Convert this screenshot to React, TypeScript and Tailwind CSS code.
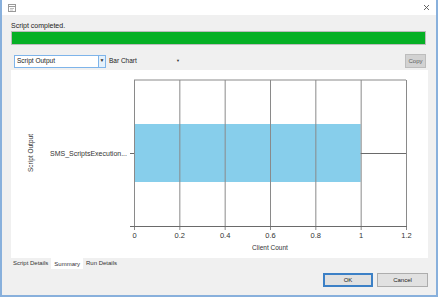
import React from 'react';

const ticks = [0, 0.2, 0.4, 0.6, 0.8, 1, 1.2];

function Chart() {
  // plot geometry inside the white panel
  const x0 = 123;
  const x1 = 395;
  const top = 10;
  const axis = 156;
  const sx = (v: number) => x0 + ((x1 - x0) * v) / 1.2;

  return (
    <svg width="417" height="188" className="block" style={{ fontFamily: '"Liberation Sans", Arial, sans-serif' }}>
      <line x1={x0} y1={top} x2={x1} y2={top} stroke="#8a8a8a" strokeWidth="1" />
      <rect x={x0} y={54} width={sx(1) - x0} height={58} fill="#87ceeb" />
      {ticks.map((t) => (
        <line key={t} x1={sx(t) + 0.5} y1={top} x2={sx(t) + 0.5} y2={axis + 4} stroke="#8a8a8a" strokeWidth="1" />
      ))}
      <line x1={sx(1)} y1={83.5} x2={x1} y2={83.5} stroke="#6a6a6a" strokeWidth="1" />
      <line x1={x0 - 4} y1={83.5} x2={x0} y2={83.5} stroke="#6a6a6a" strokeWidth="1" />
      <line x1={x0 - 4} y1={axis + 0.5} x2={x1 + 1} y2={axis + 0.5} stroke="#6a6a6a" strokeWidth="1" />
      {ticks.map((t) => (
        <text key={t} x={sx(t) + 0.5} y={168} fontSize="7.5" fill="#333" textAnchor="middle">
          {t}
        </text>
      ))}
      <text x={259} y={180} fontSize="6.5" fill="#333" textAnchor="middle">
        Client Count
      </text>
      <text x={116} y={86} fontSize="7" fill="#333" textAnchor="end">
        SMS_ScriptsExecution...
      </text>
      <text x={0} y={0} fontSize="6.5" fill="#333" textAnchor="middle" transform="translate(22 83) rotate(-90)">
        Script Output
      </text>
    </svg>
  );
}

export default function App() {
  return (
    <div
      className="w-[438px] h-[297px] flex flex-col bg-[#f0f0f0] border-x-2 border-b-2 border-[#88b0dc] text-[6.5px] text-[#222]"
      style={{ fontFamily: '"Liberation Sans", Arial, sans-serif' }}
    >
      <div className="h-[15px] bg-white flex items-center justify-between pl-[6px] pr-[6px]">
        <svg width="8" height="8" viewBox="0 0 8 8">
          <rect x="0.5" y="0.5" width="7" height="7" fill="#fff" stroke="#9a9a9a" />
          <line x1="1" y1="2.5" x2="7" y2="2.5" stroke="#9a9a9a" />
          <line x1="2" y1="4.5" x2="6" y2="4.5" stroke="#c0c0c0" />
          <line x1="2" y1="6" x2="5" y2="6" stroke="#c0c0c0" />
        </svg>
        <svg width="7" height="7" viewBox="0 0 7 7">
          <path d="M1 1 L6 6 M6 1 L1 6" stroke="#555" strokeWidth="0.9" />
        </svg>
      </div>

      <div className="flex-1 flex flex-col pl-[9px] pr-[10px]">
        <div className="mt-[6px] h-[10px] leading-[10px] text-[7px]">Script completed.</div>
        <div className="h-[14px] bg-[#06b025] border border-[#bcbcbc]" />

        <div className="mt-[9px] h-[14px] flex items-center">
          <div className="ml-[3px] w-[92px] h-[13px] bg-white border border-[#7eb4ea] flex items-center">
            <span className="flex-1 pl-[2px]">Script Output</span>
            <span className="w-[7px] h-full bg-[#e5f1fb] border-l border-[#7eb4ea] flex items-center justify-center text-[5px] text-[#333]">
              ▼
            </span>
          </div>
          <div className="w-[77px] h-[13px] flex items-center pl-[3px]">
            <span className="flex-1">Bar Chart</span>
            <span className="text-[4px] text-[#333] pr-[3px]">▼</span>
          </div>
          <div className="flex-1" />
          <div className="w-[21px] h-[14px] bg-[#d2d2d2] border border-[#bdbdbd] flex items-center justify-center text-[#5e5e5e] text-[6px]">
            Copy
          </div>
        </div>

        <div className="mt-[2px] w-[417px] h-[188px] bg-white">
          <Chart />
        </div>

        <div className="h-[11px] flex items-end gap-[2px] pl-[1px]">
          <div className="h-[10px] px-[1px] leading-[9px] text-[6px] text-[#333]">Script Details</div>
          <div className="h-[11px] px-[3px] bg-white leading-[12px] text-[6px] text-[#333]">Summary</div>
          <div className="h-[10px] px-[1px] leading-[9px] text-[6px] text-[#333]">Run Details</div>
        </div>

        <div className="mt-[4px] flex justify-end gap-[4px] -mr-[2px]">
          <div className="shrink-0 w-[50px] h-[14px] bg-[#e1e1e1] border-2 border-[#3c80c6] flex items-center justify-center text-[6px]">
            OK
          </div>
          <div className="shrink-0 w-[51px] h-[14px] bg-[#e1e1e1] border border-[#adadad] flex items-center justify-center text-[6px]">
            Cancel
          </div>
        </div>
      </div>
    </div>
  );
}
